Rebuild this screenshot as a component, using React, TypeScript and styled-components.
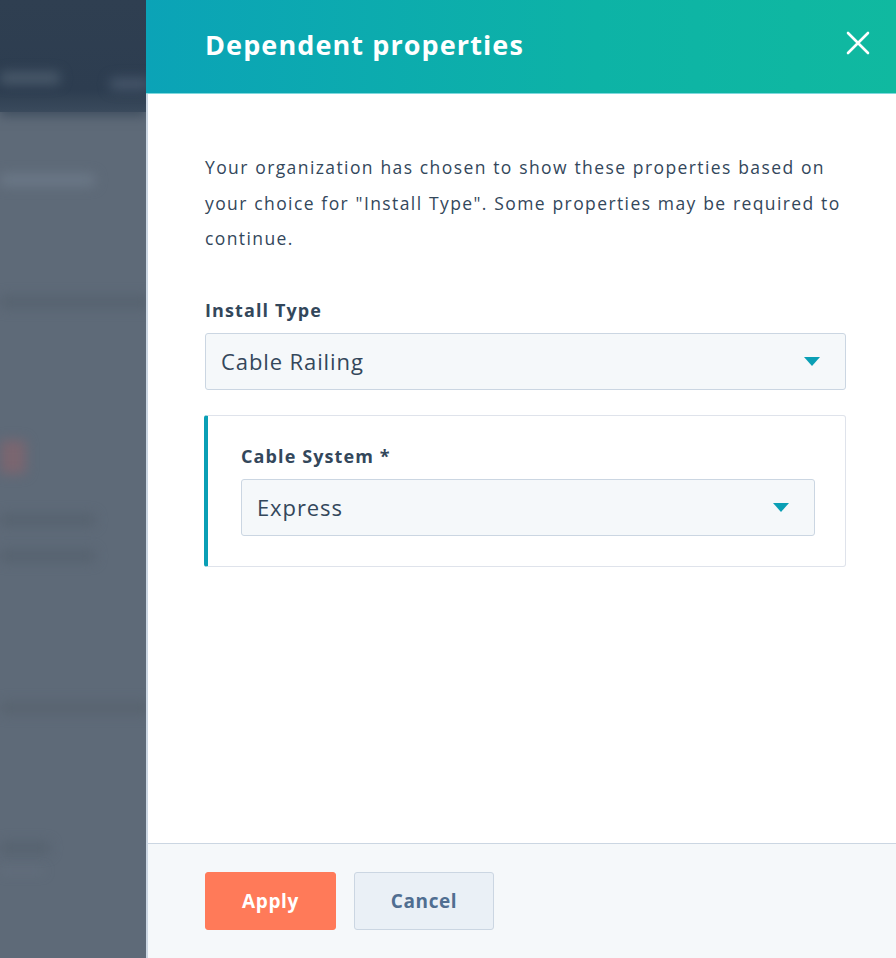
import React from "react";
import styled, { createGlobalStyle } from "styled-components";

const GlobalStyle = createGlobalStyle`
  html, body {
    margin: 0;
    padding: 0;
    height: 100%;
    overflow: hidden;
  }
  body {
    font-family: "Open Sans", "Liberation Sans", sans-serif;
    color: #33475b;
  }
`;

interface SelectFieldProps {
  label: string;
  value: string;
}

const SelectField: React.FC<SelectFieldProps> = ({ label, value }) => (
  <Field>
    <FieldLabel>{label}</FieldLabel>
    <SelectBox>
      <SelectValue>{value}</SelectValue>
      <Caret width="16" height="9" viewBox="0 0 16 9">
        <path d="M0 0 L16 0 L8 9 Z" fill="#0a9fb5" />
      </Caret>
    </SelectBox>
  </Field>
);

const App: React.FC = () => {
  return (
    <>
      <GlobalStyle />
      <Screen>
        {/* blurred page behind the side panel */}
        <Backdrop>
          <TopBand>
            <Smudge width={60} color="#4a5a6b" top={72} />
            <Smudge width={40} color="#46566a" top={-6} left={110} />
          </TopBand>
          <Smudge width={95} color="#6b7887" top={62} />
          <Smudge width={150} color="#56626f" top={110} />
          <Smudge width={26} height={34} color="#7a6670" top={132} />
          <Smudge width={95} color="#56626f" top={40} />
          <Smudge width={95} color="#56626f" top={24} />
          <Smudge width={150} color="#58636f" top={140} />
          <Smudge width={50} color="#56626f" top={128} />
          <Smudge width={44} height={2} color="#6e7a88" top={16} />
        </Backdrop>
        <Panel>
          <Header>
            <Title>Dependent properties</Title>
            <CloseButton aria-label="Close">
              <svg width="24" height="24" viewBox="0 0 24 24">
                <path
                  d="M2 2 L22 22 M22 2 L2 22"
                  stroke="#ffffff"
                  strokeWidth="2.6"
                  strokeLinecap="round"
                />
              </svg>
            </CloseButton>
          </Header>
          <Body>
            <Intro>
              Your organization has chosen to show these properties based on
              your choice for "Install Type". Some properties may be required to
              continue.
            </Intro>
            <SelectField label="Install Type" value="Cable Railing" />
            <DependentCard>
              <SelectField label="Cable System *" value="Express" />
            </DependentCard>
          </Body>
          <Footer>
            <Button variant="primary">Apply</Button>
            <Button variant="secondary">Cancel</Button>
          </Footer>
        </Panel>
      </Screen>
    </>
  );
};

export default App;

const Screen = styled.div`
  display: flex;
  width: 100vw;
  height: 100vh;
`;

const Backdrop = styled.div`
  width: 146px;
  flex-shrink: 0;
  background: #5e6a78;
  display: flex;
  flex-direction: column;
  overflow: hidden;
`;

const TopBand = styled.div`
  height: 112px;
  background: linear-gradient(#2f3f51, #2d3d50 80%, #3a4a5c);
  display: flex;
  flex-direction: column;
  box-shadow: 0 4px 10px rgba(45, 61, 80, 0.6);
`;

const Smudge = styled.div<{
  width: number;
  height?: number;
  color: string;
  top: number;
  left?: number;
}>`
  width: ${({ width }) => width}px;
  height: ${({ height }) => height ?? 12}px;
  margin-top: ${({ top }) => top}px;
  margin-left: ${({ left }) => left ?? 0}px;
  background: ${({ color }) => color};
  filter: blur(6px);
  border-radius: 4px;
  flex-shrink: 0;
`;

const Panel = styled.div`
  flex: 1;
  display: flex;
  flex-direction: column;
  background: #ffffff;
  border-left: 2px solid #cbd6e2;
  min-width: 0;
`;

const Header = styled.div`
  height: 93px;
  flex-shrink: 0;
  margin-left: -2px;
  display: flex;
  align-items: center;
  justify-content: space-between;
  padding: 0 26px 0 59px;
  background: linear-gradient(90deg, #0ba3b7 0%, #0db3a6 60%, #10b9a0 100%);
  border-bottom: 1px solid #7fd8dd;
`;

const Title = styled.h1`
  margin: 0 0 4px;
  font-size: 27px;
  font-weight: 700;
  color: #ffffff;
  letter-spacing: 1.1px;
`;

const CloseButton = styled.button`
  display: flex;
  align-items: center;
  justify-content: center;
  background: none;
  border: none;
  padding: 0;
  margin-bottom: 8px;
  cursor: pointer;
`;

const Body = styled.div`
  flex: 1;
  display: flex;
  flex-direction: column;
  padding: 56px 50px 0 57px;
`;

const Intro = styled.p`
  margin: 0 0 42px;
  font-size: 17.5px;
  line-height: 35.5px;
  color: #33475b;
  letter-spacing: 1.4px;
  word-spacing: 0.5px;
`;

const Field = styled.div`
  display: flex;
  flex-direction: column;
`;

const FieldLabel = styled.label`
  font-size: 18px;
  font-weight: 700;
  color: #33475b;
  margin-bottom: 12px;
  line-height: 22px;
  letter-spacing: 1.1px;
`;

const SelectBox = styled.div`
  height: 57px;
  box-sizing: border-box;
  display: flex;
  align-items: center;
  justify-content: space-between;
  padding: 0 25px 0 15px;
  background: #f5f8fa;
  border: 1px solid #cbd6e2;
  border-radius: 3px;
`;

const SelectValue = styled.span`
  font-size: 22px;
  color: #33475b;
  letter-spacing: 0.9px;
`;

const Caret = styled.svg`
  flex-shrink: 0;
`;

const DependentCard = styled.div`
  margin-top: 25px;
  margin-left: -1px;
  padding: 29px 30px 30px 33px;
  border: 1px solid #dfe3eb;
  border-left: 4px solid #0a9fb5;
  border-radius: 3px;
  background: #ffffff;
`;

const Footer = styled.div`
  height: 114px;
  flex-shrink: 0;
  display: flex;
  align-items: center;
  gap: 18px;
  padding: 0 57px;
  background: #f5f8fa;
  border-top: 1px solid #cbd6e2;
`;

const Button = styled.button<{ variant: "primary" | "secondary" }>`
  height: 58px;
  box-sizing: border-box;
  padding: 0;
  width: ${({ variant }) => (variant === "primary" ? "131px" : "140px")};
  font-family: "Open Sans", "Liberation Sans", sans-serif;
  font-size: 19px;
  font-weight: 700;
  letter-spacing: 0.6px;
  border-radius: 3px;
  cursor: pointer;
  background: ${({ variant }) =>
    variant === "primary" ? "#ff7a59" : "#eaf0f6"};
  color: ${({ variant }) => (variant === "primary" ? "#ffffff" : "#506e91")};
  border: 1px solid
    ${({ variant }) => (variant === "primary" ? "#ff7a59" : "#cbd6e2")};
`;
